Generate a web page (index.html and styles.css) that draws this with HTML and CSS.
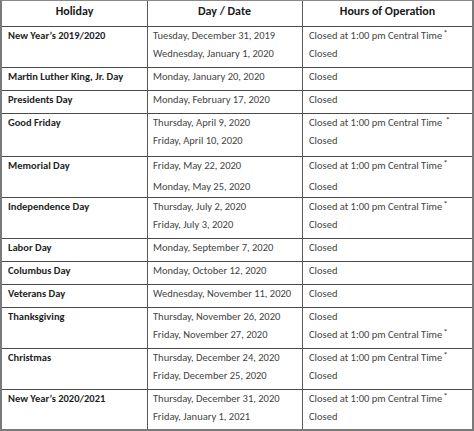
FILE: index.html
```html
<!DOCTYPE html>
<html>
<head>
<meta charset="utf-8">
<link rel="stylesheet" href="styles.css">
</head>
<body>
<div class="table">
  <div class="row head">
    <div class="cell">Holiday</div>
    <div class="cell">Day / Date</div>
    <div class="cell">Hours of Operation</div>
  </div>
  <div class="row double">
    <div class="cell name">New Year’s 2019/2020</div>
    <div class="cell"><div>Tuesday, December 31, 2019</div><div>Wednesday, January 1, 2020</div></div>
    <div class="cell"><div>Closed at 1:00 pm Central Time<span class="ast">*</span></div><div>Closed</div></div>
  </div>
  <div class="row single">
    <div class="cell name">Martin Luther King, Jr. Day</div>
    <div class="cell">Monday, January 20, 2020</div>
    <div class="cell">Closed</div>
  </div>
  <div class="row single">
    <div class="cell name">Presidents Day</div>
    <div class="cell">Monday, February 17, 2020</div>
    <div class="cell">Closed</div>
  </div>
  <div class="row tall">
    <div class="cell name">Good Friday</div>
    <div class="cell"><div>Thursday, April 9, 2020</div><div>Friday, April 10, 2020</div></div>
    <div class="cell"><div>Closed at 1:00 pm Central Time <span class="ast">*</span></div><div>Closed</div></div>
  </div>
  <div class="row double wide">
    <div class="cell name">Memorial Day</div>
    <div class="cell"><div>Friday, May 22, 2020</div><div>Monday, May 25, 2020</div></div>
    <div class="cell"><div>Closed at 1:00 pm Central Time<span class="ast">*</span></div><div>Closed</div></div>
  </div>
  <div class="row double">
    <div class="cell name">Independence Day</div>
    <div class="cell"><div>Thursday, July 2, 2020</div><div>Friday, July 3, 2020</div></div>
    <div class="cell"><div>Closed at 1:00 pm Central Time<span class="ast">*</span></div><div>Closed</div></div>
  </div>
  <div class="row single">
    <div class="cell name">Labor Day</div>
    <div class="cell">Monday, September 7, 2020</div>
    <div class="cell">Closed</div>
  </div>
  <div class="row single">
    <div class="cell name">Columbus Day</div>
    <div class="cell">Monday, October 12, 2020</div>
    <div class="cell">Closed</div>
  </div>
  <div class="row single">
    <div class="cell name">Veterans Day</div>
    <div class="cell">Wednesday, November 11, 2020</div>
    <div class="cell">Closed</div>
  </div>
  <div class="row double">
    <div class="cell name">Thanksgiving</div>
    <div class="cell"><div>Thursday, November 26, 2020</div><div>Friday, November 27, 2020</div></div>
    <div class="cell"><div>Closed</div><div>Closed at 1:00 pm Central Time<span class="ast">*</span></div></div>
  </div>
  <div class="row double">
    <div class="cell name">Christmas</div>
    <div class="cell"><div>Thursday, December 24, 2020</div><div>Friday, December 25, 2020</div></div>
    <div class="cell"><div>Closed at 1:00 pm Central Time<span class="ast">*</span></div><div>Closed</div></div>
  </div>
  <div class="row double last">
    <div class="cell name">New Year’s 2020/2021</div>
    <div class="cell"><div>Thursday, December 31, 2020</div><div>Friday, January 1, 2021</div></div>
    <div class="cell"><div>Closed at 1:00 pm Central Time<span class="ast">*</span></div><div>Closed</div></div>
  </div>
</div>
</body>
</html>
```
FILE: styles.css
```css
html, body {
  margin: 0;
  padding: 0;
  background: #ffffff;
}
body {
  font-family: Carlito, Calibri, Lato, "Liberation Sans", sans-serif;
  font-size: 10.5px;
  color: #444444;
}
.table {
  width: 474px;
  box-sizing: border-box;
  border-top: 1px solid #8a8a8a;
  border-left: 2px solid #7a7a7a;
  border-right: 2px solid #7a7a7a;
  border-bottom: 2px solid #7a7a7a;
}
.row {
  display: grid;
  grid-template-columns: 146px 155px 1fr;
  border-bottom: 1px solid #4a4a4a;
  line-height: 18px;
}
.row.last {
  border-bottom: none;
}
.cell {
  border-right: 1px solid #5a5a5a;
  padding: 0 6px;
  white-space: nowrap;
  overflow: hidden;
}
.cell:first-child {
  padding-left: 6px;
}
.cell:nth-child(2) {
  padding-left: 5px;
}
.cell:nth-child(3) {
  padding-left: 6px;
}
.cell:last-child {
  border-right: none;
}
.head {
  height: 25px;
  line-height: 21px;
  font-weight: bold;
  font-size: 12px;
  color: #1a1a1a;
}
.head .cell {
  text-align: center;
}
.name {
  font-weight: bold;
  color: #1f1f1f;
}
.single {
  height: 22px;
}
.double {
  height: 40px;
}
.tall {
  height: 42px;
}
.wide .cell:nth-child(n+2) div + div {
  margin-top: 3px;
}
.last {
  height: 39px;
}
.ast {
  font-size: 9px;
  vertical-align: 3px;
  line-height: 0;
  margin-left: 1px;
}
```
